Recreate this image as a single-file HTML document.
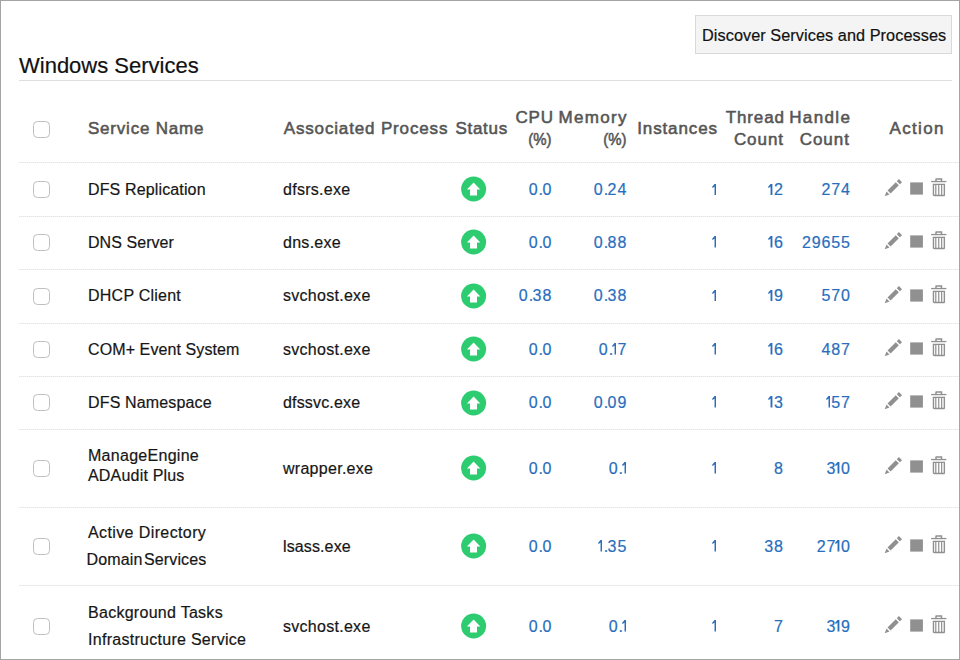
<!DOCTYPE html>
<html><head><meta charset="utf-8"><style>
html,body{margin:0;padding:0;}
body{width:960px;height:660px;position:relative;overflow:hidden;background:#fff;font-family:"Liberation Sans",sans-serif;}
.frame{position:absolute;left:0;top:0;width:960px;height:660px;box-sizing:border-box;border:1px solid #a4a4a4;z-index:5;pointer-events:none;}
.t{position:absolute;white-space:nowrap;-webkit-text-stroke:0.2px currentColor;}
.cb{position:absolute;left:33.4px;width:17px;height:17px;box-sizing:border-box;border:1.4px solid #bfbfbf;border-radius:4.5px;background:#fff;}
.sep{position:absolute;left:19px;width:941px;height:1px;background:repeating-linear-gradient(90deg,#e3e3e3 0 1px,#f6f1f5 1px 2px);}
.ic{position:absolute;}
.one{vertical-align:baseline;}
.dot{letter-spacing:-0.5px;}
</style></head><body>
<div class="t" style="left:19.00px;top:53.38px;font-size:22px;line-height:26px;font-weight:normal;color:#111;">Windows Services</div>
<div style="position:absolute;left:695px;top:15px;width:257px;height:39px;box-sizing:border-box;background:#f4f4f4;border:1px solid #d9d9d9;"></div>
<div class="t" style="left:702.00px;top:24.77px;font-size:16.25px;line-height:20px;font-weight:normal;color:#111;letter-spacing:0.07px;">Discover Services and Processes</div>
<div style="position:absolute;left:19px;top:80px;width:933px;height:1px;background:#dedede;"></div>
<div class="cb" style="top:121.4px"></div>
<div class="t" style="left:88.00px;top:118.51px;font-size:17px;line-height:20px;font-weight:normal;color:#555555;letter-spacing:0.78px;-webkit-text-stroke:0.55px #555555;">Service Name</div>
<div class="t" style="left:283.70px;top:118.51px;font-size:17px;line-height:20px;font-weight:normal;color:#555555;letter-spacing:0.85px;-webkit-text-stroke:0.55px #555555;">Associated Process</div>
<div class="t" style="left:455.50px;top:118.51px;font-size:17px;line-height:20px;font-weight:normal;color:#555555;letter-spacing:0.7px;-webkit-text-stroke:0.55px #555555;">Status</div>
<div class="t" style="right:406.20px;text-align:right;top:108.11px;font-size:17px;line-height:20px;font-weight:normal;color:#555555;letter-spacing:0.8px;-webkit-text-stroke:0.55px #555555;">CPU</div>
<div class="t" style="right:408.50px;text-align:right;top:129.61px;font-size:17px;line-height:20px;font-weight:normal;color:#555555;-webkit-text-stroke:0.55px #555555;transform:scaleX(0.88);transform-origin:100% 50%;">(%)</div>
<div class="t" style="right:332.20px;text-align:right;top:108.11px;font-size:17px;line-height:20px;font-weight:normal;color:#555555;letter-spacing:1.3px;-webkit-text-stroke:0.55px #555555;">Memory</div>
<div class="t" style="right:333.50px;text-align:right;top:129.61px;font-size:17px;line-height:20px;font-weight:normal;color:#555555;-webkit-text-stroke:0.55px #555555;transform:scaleX(0.88);transform-origin:100% 50%;">(%)</div>
<div class="t" style="right:242.12px;text-align:right;top:118.51px;font-size:17px;line-height:20px;font-weight:normal;color:#555555;letter-spacing:0.88px;-webkit-text-stroke:0.55px #555555;">Instances</div>
<div class="t" style="right:175.10px;text-align:right;top:108.11px;font-size:17px;line-height:20px;font-weight:normal;color:#555555;letter-spacing:0.9px;-webkit-text-stroke:0.55px #555555;">Thread</div>
<div class="t" style="right:176.06px;text-align:right;top:129.61px;font-size:17px;line-height:20px;font-weight:normal;color:#555555;letter-spacing:0.94px;-webkit-text-stroke:0.55px #555555;">Count</div>
<div class="t" style="right:108.60px;text-align:right;top:108.11px;font-size:17px;line-height:20px;font-weight:normal;color:#555555;letter-spacing:1.4px;-webkit-text-stroke:0.55px #555555;">Handle</div>
<div class="t" style="right:110.00px;text-align:right;top:129.61px;font-size:17px;line-height:20px;font-weight:normal;color:#555555;letter-spacing:1.0px;-webkit-text-stroke:0.55px #555555;">Count</div>
<div class="t" style="right:15.15px;text-align:right;top:118.51px;font-size:17px;line-height:20px;font-weight:normal;color:#555555;letter-spacing:1.35px;-webkit-text-stroke:0.55px #555555;">Action</div>
<div class="sep" style="top:162.0px"></div>
<div class="sep" style="top:215.5px"></div>
<div class="sep" style="top:269.0px"></div>
<div class="sep" style="top:322.5px"></div>
<div class="sep" style="top:376.0px"></div>
<div class="sep" style="top:429.0px"></div>
<div class="sep" style="top:507.3px"></div>
<div class="sep" style="top:585.4px"></div>
<div class="cb" style="top:180.55px"></div>
<div class="t" style="left:88.00px;top:180.46px;font-size:16px;line-height:20px;font-weight:normal;color:#161616;letter-spacing:0.14px;">DFS Replication</div>
<div class="t" style="left:283.00px;top:180.46px;font-size:16px;line-height:20px;font-weight:normal;color:#161616;letter-spacing:0.28px;">dfsrs.exe</div>
<div class="t" style="right:407.80px;text-align:right;top:180.46px;font-size:16px;line-height:20px;font-weight:normal;color:#286ebd;letter-spacing:0.9px;">0<span class="dot">.</span>0</div>
<div class="t" style="right:332.80px;text-align:right;top:180.46px;font-size:16px;line-height:20px;font-weight:normal;color:#286ebd;letter-spacing:0.9px;">0<span class="dot">.</span>24</div>
<div class="t" style="right:242.70px;text-align:right;top:180.46px;font-size:16px;line-height:20px;font-weight:normal;color:#286ebd;letter-spacing:0.9px;"><svg class="one" style="margin-left:0px;margin-right:1.2px" width="4.4" height="11.6" viewBox="0 0 4.4 11.6"><path d="M2.55 0 H4.4 V11.6 H2.55 V2.6 L0.85 4.1 L0 3 Z" fill="currentColor"/></svg></div>
<div class="t" style="right:176.10px;text-align:right;top:180.46px;font-size:16px;line-height:20px;font-weight:normal;color:#286ebd;letter-spacing:0.9px;"><svg class="one" style="margin-left:0px;margin-right:1.3px" width="4.4" height="11.6" viewBox="0 0 4.4 11.6"><path d="M2.55 0 H4.4 V11.6 H2.55 V2.6 L0.85 4.1 L0 3 Z" fill="currentColor"/></svg>2</div>
<div class="t" style="right:109.10px;text-align:right;top:180.46px;font-size:16px;line-height:20px;font-weight:normal;color:#286ebd;letter-spacing:0.9px;">274</div>
<svg class="ic" style="left:460px;top:174.85px" width="28" height="28" viewBox="0 0 28 28"><circle cx="13.6" cy="14" r="12.5" fill="#2ecc71"/><path d="M13.6 7.4 L20.3 14.6 L17 14.6 L17 20.5 L10 20.5 L10 14.6 L6.9 14.6 Z" fill="#fff"/></svg>
<svg class="ic" style="left:880px;top:174.00px" width="72" height="28" viewBox="0 0 72 28"><g transform="translate(4.7 22.35) rotate(-45)" fill="#909090"><path d="M0 0 L4.7 -2.1 L4.7 2.1 Z"/><rect x="6.2" y="-2.2" width="11.6" height="4.4"/><rect x="19.3" y="-2.2" width="3" height="4.4"/></g><rect x="30.2" y="8.4" width="12.7" height="12.2" fill="#909090"/><g fill="none" stroke="#909090" stroke-width="1.3"><path d="M51.1 7.55 H66.4"/><path d="M56 7.4 V5.2 Q56 4.95 56.3 4.95 H61.5 Q61.5 4.95 61.5 5.2 V7.4" stroke-width="1.5"/><path d="M53.45 10.35 V21 Q53.45 21.45 54.2 21.45 H64.2 Q64.35 21.45 64.35 21 V10.35 Z" stroke-width="1.4"/><path d="M55.8 10.3 V21.4 M58.75 10.3 V21.4 M61.65 10.3 V21.4" stroke-width="1.2"/></g></svg>
<div class="cb" style="top:234.05px"></div>
<div class="t" style="left:88.00px;top:232.96px;font-size:16px;line-height:20px;font-weight:normal;color:#161616;letter-spacing:0.06px;">DNS Server</div>
<div class="t" style="left:283.00px;top:232.96px;font-size:16px;line-height:20px;font-weight:normal;color:#161616;letter-spacing:0.28px;">dns.exe</div>
<div class="t" style="right:407.80px;text-align:right;top:232.96px;font-size:16px;line-height:20px;font-weight:normal;color:#286ebd;letter-spacing:0.9px;">0<span class="dot">.</span>0</div>
<div class="t" style="right:332.80px;text-align:right;top:232.96px;font-size:16px;line-height:20px;font-weight:normal;color:#286ebd;letter-spacing:0.9px;">0<span class="dot">.</span>88</div>
<div class="t" style="right:242.70px;text-align:right;top:232.96px;font-size:16px;line-height:20px;font-weight:normal;color:#286ebd;letter-spacing:0.9px;"><svg class="one" style="margin-left:0px;margin-right:1.2px" width="4.4" height="11.6" viewBox="0 0 4.4 11.6"><path d="M2.55 0 H4.4 V11.6 H2.55 V2.6 L0.85 4.1 L0 3 Z" fill="currentColor"/></svg></div>
<div class="t" style="right:176.10px;text-align:right;top:232.96px;font-size:16px;line-height:20px;font-weight:normal;color:#286ebd;letter-spacing:0.9px;"><svg class="one" style="margin-left:0px;margin-right:1.3px" width="4.4" height="11.6" viewBox="0 0 4.4 11.6"><path d="M2.55 0 H4.4 V11.6 H2.55 V2.6 L0.85 4.1 L0 3 Z" fill="currentColor"/></svg>6</div>
<div class="t" style="right:109.10px;text-align:right;top:232.96px;font-size:16px;line-height:20px;font-weight:normal;color:#286ebd;letter-spacing:0.9px;">29655</div>
<svg class="ic" style="left:460px;top:228.35px" width="28" height="28" viewBox="0 0 28 28"><circle cx="13.6" cy="14" r="12.5" fill="#2ecc71"/><path d="M13.6 7.4 L20.3 14.6 L17 14.6 L17 20.5 L10 20.5 L10 14.6 L6.9 14.6 Z" fill="#fff"/></svg>
<svg class="ic" style="left:880px;top:227.40px" width="72" height="28" viewBox="0 0 72 28"><g transform="translate(4.7 22.35) rotate(-45)" fill="#909090"><path d="M0 0 L4.7 -2.1 L4.7 2.1 Z"/><rect x="6.2" y="-2.2" width="11.6" height="4.4"/><rect x="19.3" y="-2.2" width="3" height="4.4"/></g><rect x="30.2" y="8.4" width="12.7" height="12.2" fill="#909090"/><g fill="none" stroke="#909090" stroke-width="1.3"><path d="M51.1 7.55 H66.4"/><path d="M56 7.4 V5.2 Q56 4.95 56.3 4.95 H61.5 Q61.5 4.95 61.5 5.2 V7.4" stroke-width="1.5"/><path d="M53.45 10.35 V21 Q53.45 21.45 54.2 21.45 H64.2 Q64.35 21.45 64.35 21 V10.35 Z" stroke-width="1.4"/><path d="M55.8 10.3 V21.4 M58.75 10.3 V21.4 M61.65 10.3 V21.4" stroke-width="1.2"/></g></svg>
<div class="cb" style="top:287.55px"></div>
<div class="t" style="left:88.00px;top:286.16px;font-size:16px;line-height:20px;font-weight:normal;color:#161616;letter-spacing:0.24px;">DHCP Client</div>
<div class="t" style="left:283.00px;top:286.16px;font-size:16px;line-height:20px;font-weight:normal;color:#161616;letter-spacing:0.28px;">svchost.exe</div>
<div class="t" style="right:407.80px;text-align:right;top:286.16px;font-size:16px;line-height:20px;font-weight:normal;color:#286ebd;letter-spacing:0.9px;">0<span class="dot">.</span>38</div>
<div class="t" style="right:332.80px;text-align:right;top:286.16px;font-size:16px;line-height:20px;font-weight:normal;color:#286ebd;letter-spacing:0.9px;">0<span class="dot">.</span>38</div>
<div class="t" style="right:242.70px;text-align:right;top:286.16px;font-size:16px;line-height:20px;font-weight:normal;color:#286ebd;letter-spacing:0.9px;"><svg class="one" style="margin-left:0px;margin-right:1.2px" width="4.4" height="11.6" viewBox="0 0 4.4 11.6"><path d="M2.55 0 H4.4 V11.6 H2.55 V2.6 L0.85 4.1 L0 3 Z" fill="currentColor"/></svg></div>
<div class="t" style="right:176.10px;text-align:right;top:286.16px;font-size:16px;line-height:20px;font-weight:normal;color:#286ebd;letter-spacing:0.9px;"><svg class="one" style="margin-left:0px;margin-right:1.3px" width="4.4" height="11.6" viewBox="0 0 4.4 11.6"><path d="M2.55 0 H4.4 V11.6 H2.55 V2.6 L0.85 4.1 L0 3 Z" fill="currentColor"/></svg>9</div>
<div class="t" style="right:109.10px;text-align:right;top:286.16px;font-size:16px;line-height:20px;font-weight:normal;color:#286ebd;letter-spacing:0.9px;">570</div>
<svg class="ic" style="left:460px;top:281.85px" width="28" height="28" viewBox="0 0 28 28"><circle cx="13.6" cy="14" r="12.5" fill="#2ecc71"/><path d="M13.6 7.4 L20.3 14.6 L17 14.6 L17 20.5 L10 20.5 L10 14.6 L6.9 14.6 Z" fill="#fff"/></svg>
<svg class="ic" style="left:880px;top:280.70px" width="72" height="28" viewBox="0 0 72 28"><g transform="translate(4.7 22.35) rotate(-45)" fill="#909090"><path d="M0 0 L4.7 -2.1 L4.7 2.1 Z"/><rect x="6.2" y="-2.2" width="11.6" height="4.4"/><rect x="19.3" y="-2.2" width="3" height="4.4"/></g><rect x="30.2" y="8.4" width="12.7" height="12.2" fill="#909090"/><g fill="none" stroke="#909090" stroke-width="1.3"><path d="M51.1 7.55 H66.4"/><path d="M56 7.4 V5.2 Q56 4.95 56.3 4.95 H61.5 Q61.5 4.95 61.5 5.2 V7.4" stroke-width="1.5"/><path d="M53.45 10.35 V21 Q53.45 21.45 54.2 21.45 H64.2 Q64.35 21.45 64.35 21 V10.35 Z" stroke-width="1.4"/><path d="M55.8 10.3 V21.4 M58.75 10.3 V21.4 M61.65 10.3 V21.4" stroke-width="1.2"/></g></svg>
<div class="cb" style="top:341.05px"></div>
<div class="t" style="left:88.00px;top:339.76px;font-size:16px;line-height:20px;font-weight:normal;color:#161616;letter-spacing:0.1px;">COM+ Event System</div>
<div class="t" style="left:283.00px;top:339.76px;font-size:16px;line-height:20px;font-weight:normal;color:#161616;letter-spacing:0.28px;">svchost.exe</div>
<div class="t" style="right:407.80px;text-align:right;top:339.76px;font-size:16px;line-height:20px;font-weight:normal;color:#286ebd;letter-spacing:0.9px;">0<span class="dot">.</span>0</div>
<div class="t" style="right:332.80px;text-align:right;top:339.76px;font-size:16px;line-height:20px;font-weight:normal;color:#286ebd;letter-spacing:0.9px;">0<span class="dot">.</span><svg class="one" style="margin-left:-0.9px;margin-right:1.3px" width="4.4" height="11.6" viewBox="0 0 4.4 11.6"><path d="M2.55 0 H4.4 V11.6 H2.55 V2.6 L0.85 4.1 L0 3 Z" fill="currentColor"/></svg>7</div>
<div class="t" style="right:242.70px;text-align:right;top:339.76px;font-size:16px;line-height:20px;font-weight:normal;color:#286ebd;letter-spacing:0.9px;"><svg class="one" style="margin-left:0px;margin-right:1.2px" width="4.4" height="11.6" viewBox="0 0 4.4 11.6"><path d="M2.55 0 H4.4 V11.6 H2.55 V2.6 L0.85 4.1 L0 3 Z" fill="currentColor"/></svg></div>
<div class="t" style="right:176.10px;text-align:right;top:339.76px;font-size:16px;line-height:20px;font-weight:normal;color:#286ebd;letter-spacing:0.9px;"><svg class="one" style="margin-left:0px;margin-right:1.3px" width="4.4" height="11.6" viewBox="0 0 4.4 11.6"><path d="M2.55 0 H4.4 V11.6 H2.55 V2.6 L0.85 4.1 L0 3 Z" fill="currentColor"/></svg>6</div>
<div class="t" style="right:109.10px;text-align:right;top:339.76px;font-size:16px;line-height:20px;font-weight:normal;color:#286ebd;letter-spacing:0.9px;">487</div>
<svg class="ic" style="left:460px;top:335.35px" width="28" height="28" viewBox="0 0 28 28"><circle cx="13.6" cy="14" r="12.5" fill="#2ecc71"/><path d="M13.6 7.4 L20.3 14.6 L17 14.6 L17 20.5 L10 20.5 L10 14.6 L6.9 14.6 Z" fill="#fff"/></svg>
<svg class="ic" style="left:880px;top:333.70px" width="72" height="28" viewBox="0 0 72 28"><g transform="translate(4.7 22.35) rotate(-45)" fill="#909090"><path d="M0 0 L4.7 -2.1 L4.7 2.1 Z"/><rect x="6.2" y="-2.2" width="11.6" height="4.4"/><rect x="19.3" y="-2.2" width="3" height="4.4"/></g><rect x="30.2" y="8.4" width="12.7" height="12.2" fill="#909090"/><g fill="none" stroke="#909090" stroke-width="1.3"><path d="M51.1 7.55 H66.4"/><path d="M56 7.4 V5.2 Q56 4.95 56.3 4.95 H61.5 Q61.5 4.95 61.5 5.2 V7.4" stroke-width="1.5"/><path d="M53.45 10.35 V21 Q53.45 21.45 54.2 21.45 H64.2 Q64.35 21.45 64.35 21 V10.35 Z" stroke-width="1.4"/><path d="M55.8 10.3 V21.4 M58.75 10.3 V21.4 M61.65 10.3 V21.4" stroke-width="1.2"/></g></svg>
<div class="cb" style="top:394.3px"></div>
<div class="t" style="left:88.00px;top:392.56px;font-size:16px;line-height:20px;font-weight:normal;color:#161616;letter-spacing:0.15px;">DFS Namespace</div>
<div class="t" style="left:283.00px;top:392.56px;font-size:16px;line-height:20px;font-weight:normal;color:#161616;letter-spacing:0.17px;">dfssvc.exe</div>
<div class="t" style="right:407.80px;text-align:right;top:392.56px;font-size:16px;line-height:20px;font-weight:normal;color:#286ebd;letter-spacing:0.9px;">0<span class="dot">.</span>0</div>
<div class="t" style="right:332.80px;text-align:right;top:392.56px;font-size:16px;line-height:20px;font-weight:normal;color:#286ebd;letter-spacing:0.9px;">0<span class="dot">.</span>09</div>
<div class="t" style="right:242.70px;text-align:right;top:392.56px;font-size:16px;line-height:20px;font-weight:normal;color:#286ebd;letter-spacing:0.9px;"><svg class="one" style="margin-left:0px;margin-right:1.2px" width="4.4" height="11.6" viewBox="0 0 4.4 11.6"><path d="M2.55 0 H4.4 V11.6 H2.55 V2.6 L0.85 4.1 L0 3 Z" fill="currentColor"/></svg></div>
<div class="t" style="right:176.10px;text-align:right;top:392.56px;font-size:16px;line-height:20px;font-weight:normal;color:#286ebd;letter-spacing:0.9px;"><svg class="one" style="margin-left:0px;margin-right:1.3px" width="4.4" height="11.6" viewBox="0 0 4.4 11.6"><path d="M2.55 0 H4.4 V11.6 H2.55 V2.6 L0.85 4.1 L0 3 Z" fill="currentColor"/></svg>3</div>
<div class="t" style="right:109.10px;text-align:right;top:392.56px;font-size:16px;line-height:20px;font-weight:normal;color:#286ebd;letter-spacing:0.9px;"><svg class="one" style="margin-left:0px;margin-right:1.3px" width="4.4" height="11.6" viewBox="0 0 4.4 11.6"><path d="M2.55 0 H4.4 V11.6 H2.55 V2.6 L0.85 4.1 L0 3 Z" fill="currentColor"/></svg>57</div>
<svg class="ic" style="left:460px;top:388.60px" width="28" height="28" viewBox="0 0 28 28"><circle cx="13.6" cy="14" r="12.5" fill="#2ecc71"/><path d="M13.6 7.4 L20.3 14.6 L17 14.6 L17 20.5 L10 20.5 L10 14.6 L6.9 14.6 Z" fill="#fff"/></svg>
<svg class="ic" style="left:880px;top:387.00px" width="72" height="28" viewBox="0 0 72 28"><g transform="translate(4.7 22.35) rotate(-45)" fill="#909090"><path d="M0 0 L4.7 -2.1 L4.7 2.1 Z"/><rect x="6.2" y="-2.2" width="11.6" height="4.4"/><rect x="19.3" y="-2.2" width="3" height="4.4"/></g><rect x="30.2" y="8.4" width="12.7" height="12.2" fill="#909090"/><g fill="none" stroke="#909090" stroke-width="1.3"><path d="M51.1 7.55 H66.4"/><path d="M56 7.4 V5.2 Q56 4.95 56.3 4.95 H61.5 Q61.5 4.95 61.5 5.2 V7.4" stroke-width="1.5"/><path d="M53.45 10.35 V21 Q53.45 21.45 54.2 21.45 H64.2 Q64.35 21.45 64.35 21 V10.35 Z" stroke-width="1.4"/><path d="M55.8 10.3 V21.4 M58.75 10.3 V21.4 M61.65 10.3 V21.4" stroke-width="1.2"/></g></svg>
<div class="cb" style="top:459.95px"></div>
<div class="t" style="left:88.00px;top:445.56px;font-size:16px;line-height:20px;font-weight:normal;color:#161616;letter-spacing:0.28px;">ManageEngine</div>
<div class="t" style="left:88.00px;top:466.06px;font-size:16px;line-height:20px;font-weight:normal;color:#161616;letter-spacing:0.19px;">ADAudit Plus</div>
<div class="t" style="left:283.00px;top:458.56px;font-size:16px;line-height:20px;font-weight:normal;color:#161616;letter-spacing:0.28px;">wrapper.exe</div>
<div class="t" style="right:407.80px;text-align:right;top:458.56px;font-size:16px;line-height:20px;font-weight:normal;color:#286ebd;letter-spacing:0.9px;">0<span class="dot">.</span>0</div>
<div class="t" style="right:332.80px;text-align:right;top:458.56px;font-size:16px;line-height:20px;font-weight:normal;color:#286ebd;letter-spacing:0.9px;">0<span class="dot">.</span><svg class="one" style="margin-left:-0.9px;margin-right:1.2px" width="4.4" height="11.6" viewBox="0 0 4.4 11.6"><path d="M2.55 0 H4.4 V11.6 H2.55 V2.6 L0.85 4.1 L0 3 Z" fill="currentColor"/></svg></div>
<div class="t" style="right:242.70px;text-align:right;top:458.56px;font-size:16px;line-height:20px;font-weight:normal;color:#286ebd;letter-spacing:0.9px;"><svg class="one" style="margin-left:0px;margin-right:1.2px" width="4.4" height="11.6" viewBox="0 0 4.4 11.6"><path d="M2.55 0 H4.4 V11.6 H2.55 V2.6 L0.85 4.1 L0 3 Z" fill="currentColor"/></svg></div>
<div class="t" style="right:176.10px;text-align:right;top:458.56px;font-size:16px;line-height:20px;font-weight:normal;color:#286ebd;letter-spacing:0.9px;">8</div>
<div class="t" style="right:109.10px;text-align:right;top:458.56px;font-size:16px;line-height:20px;font-weight:normal;color:#286ebd;letter-spacing:0.9px;">3<svg class="one" style="margin-left:-0.9px;margin-right:1.3px" width="4.4" height="11.6" viewBox="0 0 4.4 11.6"><path d="M2.55 0 H4.4 V11.6 H2.55 V2.6 L0.85 4.1 L0 3 Z" fill="currentColor"/></svg>0</div>
<svg class="ic" style="left:460px;top:454.25px" width="28" height="28" viewBox="0 0 28 28"><circle cx="13.6" cy="14" r="12.5" fill="#2ecc71"/><path d="M13.6 7.4 L20.3 14.6 L17 14.6 L17 20.5 L10 20.5 L10 14.6 L6.9 14.6 Z" fill="#fff"/></svg>
<svg class="ic" style="left:880px;top:452.40px" width="72" height="28" viewBox="0 0 72 28"><g transform="translate(4.7 22.35) rotate(-45)" fill="#909090"><path d="M0 0 L4.7 -2.1 L4.7 2.1 Z"/><rect x="6.2" y="-2.2" width="11.6" height="4.4"/><rect x="19.3" y="-2.2" width="3" height="4.4"/></g><rect x="30.2" y="8.4" width="12.7" height="12.2" fill="#909090"/><g fill="none" stroke="#909090" stroke-width="1.3"><path d="M51.1 7.55 H66.4"/><path d="M56 7.4 V5.2 Q56 4.95 56.3 4.95 H61.5 Q61.5 4.95 61.5 5.2 V7.4" stroke-width="1.5"/><path d="M53.45 10.35 V21 Q53.45 21.45 54.2 21.45 H64.2 Q64.35 21.45 64.35 21 V10.35 Z" stroke-width="1.4"/><path d="M55.8 10.3 V21.4 M58.75 10.3 V21.4 M61.65 10.3 V21.4" stroke-width="1.2"/></g></svg>
<div class="cb" style="top:538.15px"></div>
<div class="t" style="left:88.00px;top:523.36px;font-size:16px;line-height:20px;font-weight:normal;color:#161616;letter-spacing:0.39px;">Active Directory</div>
<div class="t" style="left:86.50px;top:550.16px;font-size:16px;line-height:20px;font-weight:normal;color:#161616;letter-spacing:0.15px;">Domain<span style="letter-spacing:0"> </span>Services</div>
<div class="t" style="left:283.00px;top:536.96px;font-size:16px;line-height:20px;font-weight:normal;color:#161616;letter-spacing:0.12px;">lsass.exe</div>
<div class="t" style="right:407.80px;text-align:right;top:536.96px;font-size:16px;line-height:20px;font-weight:normal;color:#286ebd;letter-spacing:0.9px;">0<span class="dot">.</span>0</div>
<div class="t" style="right:332.80px;text-align:right;top:536.96px;font-size:16px;line-height:20px;font-weight:normal;color:#286ebd;letter-spacing:0.9px;"><svg class="one" style="margin-left:0px;margin-right:1.3px" width="4.4" height="11.6" viewBox="0 0 4.4 11.6"><path d="M2.55 0 H4.4 V11.6 H2.55 V2.6 L0.85 4.1 L0 3 Z" fill="currentColor"/></svg><span class="dot">.</span>35</div>
<div class="t" style="right:242.70px;text-align:right;top:536.96px;font-size:16px;line-height:20px;font-weight:normal;color:#286ebd;letter-spacing:0.9px;"><svg class="one" style="margin-left:0px;margin-right:1.2px" width="4.4" height="11.6" viewBox="0 0 4.4 11.6"><path d="M2.55 0 H4.4 V11.6 H2.55 V2.6 L0.85 4.1 L0 3 Z" fill="currentColor"/></svg></div>
<div class="t" style="right:176.10px;text-align:right;top:536.96px;font-size:16px;line-height:20px;font-weight:normal;color:#286ebd;letter-spacing:0.9px;">38</div>
<div class="t" style="right:109.10px;text-align:right;top:536.96px;font-size:16px;line-height:20px;font-weight:normal;color:#286ebd;letter-spacing:0.9px;">27<svg class="one" style="margin-left:-0.9px;margin-right:1.3px" width="4.4" height="11.6" viewBox="0 0 4.4 11.6"><path d="M2.55 0 H4.4 V11.6 H2.55 V2.6 L0.85 4.1 L0 3 Z" fill="currentColor"/></svg>0</div>
<svg class="ic" style="left:460px;top:532.45px" width="28" height="28" viewBox="0 0 28 28"><circle cx="13.6" cy="14" r="12.5" fill="#2ecc71"/><path d="M13.6 7.4 L20.3 14.6 L17 14.6 L17 20.5 L10 20.5 L10 14.6 L6.9 14.6 Z" fill="#fff"/></svg>
<svg class="ic" style="left:880px;top:530.50px" width="72" height="28" viewBox="0 0 72 28"><g transform="translate(4.7 22.35) rotate(-45)" fill="#909090"><path d="M0 0 L4.7 -2.1 L4.7 2.1 Z"/><rect x="6.2" y="-2.2" width="11.6" height="4.4"/><rect x="19.3" y="-2.2" width="3" height="4.4"/></g><rect x="30.2" y="8.4" width="12.7" height="12.2" fill="#909090"/><g fill="none" stroke="#909090" stroke-width="1.3"><path d="M51.1 7.55 H66.4"/><path d="M56 7.4 V5.2 Q56 4.95 56.3 4.95 H61.5 Q61.5 4.95 61.5 5.2 V7.4" stroke-width="1.5"/><path d="M53.45 10.35 V21 Q53.45 21.45 54.2 21.45 H64.2 Q64.35 21.45 64.35 21 V10.35 Z" stroke-width="1.4"/><path d="M55.8 10.3 V21.4 M58.75 10.3 V21.4 M61.65 10.3 V21.4" stroke-width="1.2"/></g></svg>
<div class="cb" style="top:618.0px"></div>
<div class="t" style="left:88.00px;top:602.96px;font-size:16px;line-height:20px;font-weight:normal;color:#161616;letter-spacing:0.28px;">Background Tasks</div>
<div class="t" style="left:88.00px;top:630.16px;font-size:16px;line-height:20px;font-weight:normal;color:#161616;letter-spacing:0.28px;">Infrastructure Service</div>
<div class="t" style="left:283.00px;top:617.06px;font-size:16px;line-height:20px;font-weight:normal;color:#161616;letter-spacing:0.28px;">svchost.exe</div>
<div class="t" style="right:407.80px;text-align:right;top:617.06px;font-size:16px;line-height:20px;font-weight:normal;color:#286ebd;letter-spacing:0.9px;">0<span class="dot">.</span>0</div>
<div class="t" style="right:332.80px;text-align:right;top:617.06px;font-size:16px;line-height:20px;font-weight:normal;color:#286ebd;letter-spacing:0.9px;">0<span class="dot">.</span><svg class="one" style="margin-left:-0.9px;margin-right:1.2px" width="4.4" height="11.6" viewBox="0 0 4.4 11.6"><path d="M2.55 0 H4.4 V11.6 H2.55 V2.6 L0.85 4.1 L0 3 Z" fill="currentColor"/></svg></div>
<div class="t" style="right:242.70px;text-align:right;top:617.06px;font-size:16px;line-height:20px;font-weight:normal;color:#286ebd;letter-spacing:0.9px;"><svg class="one" style="margin-left:0px;margin-right:1.2px" width="4.4" height="11.6" viewBox="0 0 4.4 11.6"><path d="M2.55 0 H4.4 V11.6 H2.55 V2.6 L0.85 4.1 L0 3 Z" fill="currentColor"/></svg></div>
<div class="t" style="right:176.10px;text-align:right;top:617.06px;font-size:16px;line-height:20px;font-weight:normal;color:#286ebd;letter-spacing:0.9px;">7</div>
<div class="t" style="right:109.10px;text-align:right;top:617.06px;font-size:16px;line-height:20px;font-weight:normal;color:#286ebd;letter-spacing:0.9px;">3<svg class="one" style="margin-left:-0.9px;margin-right:1.3px" width="4.4" height="11.6" viewBox="0 0 4.4 11.6"><path d="M2.55 0 H4.4 V11.6 H2.55 V2.6 L0.85 4.1 L0 3 Z" fill="currentColor"/></svg>9</div>
<svg class="ic" style="left:460px;top:612.30px" width="28" height="28" viewBox="0 0 28 28"><circle cx="13.6" cy="14" r="12.5" fill="#2ecc71"/><path d="M13.6 7.4 L20.3 14.6 L17 14.6 L17 20.5 L10 20.5 L10 14.6 L6.9 14.6 Z" fill="#fff"/></svg>
<svg class="ic" style="left:880px;top:610.90px" width="72" height="28" viewBox="0 0 72 28"><g transform="translate(4.7 22.35) rotate(-45)" fill="#909090"><path d="M0 0 L4.7 -2.1 L4.7 2.1 Z"/><rect x="6.2" y="-2.2" width="11.6" height="4.4"/><rect x="19.3" y="-2.2" width="3" height="4.4"/></g><rect x="30.2" y="8.4" width="12.7" height="12.2" fill="#909090"/><g fill="none" stroke="#909090" stroke-width="1.3"><path d="M51.1 7.55 H66.4"/><path d="M56 7.4 V5.2 Q56 4.95 56.3 4.95 H61.5 Q61.5 4.95 61.5 5.2 V7.4" stroke-width="1.5"/><path d="M53.45 10.35 V21 Q53.45 21.45 54.2 21.45 H64.2 Q64.35 21.45 64.35 21 V10.35 Z" stroke-width="1.4"/><path d="M55.8 10.3 V21.4 M58.75 10.3 V21.4 M61.65 10.3 V21.4" stroke-width="1.2"/></g></svg>
<div class="frame"></div>
</body></html>
